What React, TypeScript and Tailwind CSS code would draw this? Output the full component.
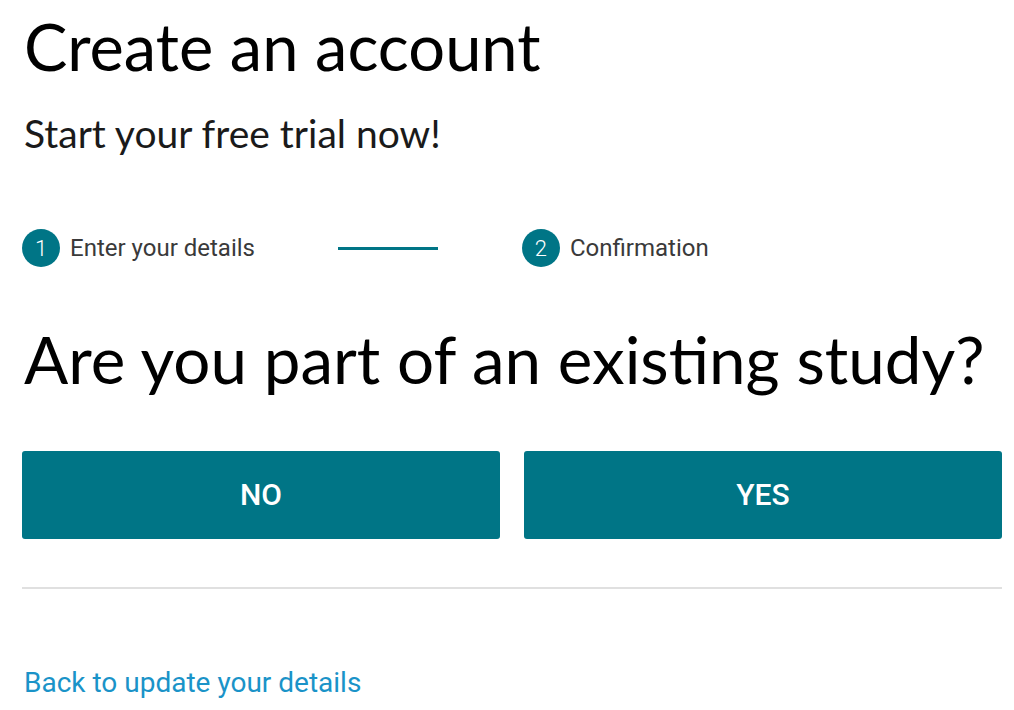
const Step = ({ n, label }: { n: number; label: string }) => (
  <div className="flex items-center gap-[10px]">
    <div className="w-[38px] h-[38px] rounded-full bg-[#007586] text-white flex items-center justify-center text-[22px] font-light">
      {n}
    </div>
    <span className="text-[24px] text-[#3a3a3a] leading-none">{label}</span>
  </div>
);

const App = () => {
  return (
    <div className="w-[1014px] h-[710px] bg-white pl-[22px] pr-[12px] font-['Roboto',sans-serif] overflow-hidden">
      <h1 className="font-['Lato',sans-serif] text-[65px] leading-none text-black pt-[14px] pl-[2px]">
        Create an account
      </h1>
      <p className="font-['Lato',sans-serif] text-[39px] text-[#1a1a1a] mt-[35px] pl-[2px] leading-none">
        Start your free trial now!
      </p>
      <div className="flex items-center mt-[76px]">
        <Step n={1} label="Enter your details" />
        <div className="w-[100px] h-[3px] bg-[#007586] ml-[83px] mr-[84px]" />
        <Step n={2} label="Confirmation" />
      </div>
      <h2 className="font-['Lato',sans-serif] text-[65.5px] leading-none text-black mt-[59px] pl-[2px]">
        Are you part of an existing study?
      </h2>
      <div className="grid grid-cols-2 gap-[24px] mt-[59px]">
        <button className="h-[88px] rounded-[3px] bg-[#007586] text-white text-[30px] font-medium uppercase">
          No
        </button>
        <button className="h-[88px] rounded-[3px] bg-[#007586] text-white text-[30px] font-medium uppercase">
          Yes
        </button>
      </div>
      <hr className="mt-[48px] border-0 h-[2px] bg-[#e0e0e0]" />
      <a href="#" className="inline-block mt-[80px] pl-[2px] text-[28px] leading-none text-[#1a93c8]">
        Back to update your details
      </a>
    </div>
  );
};

export default App;
